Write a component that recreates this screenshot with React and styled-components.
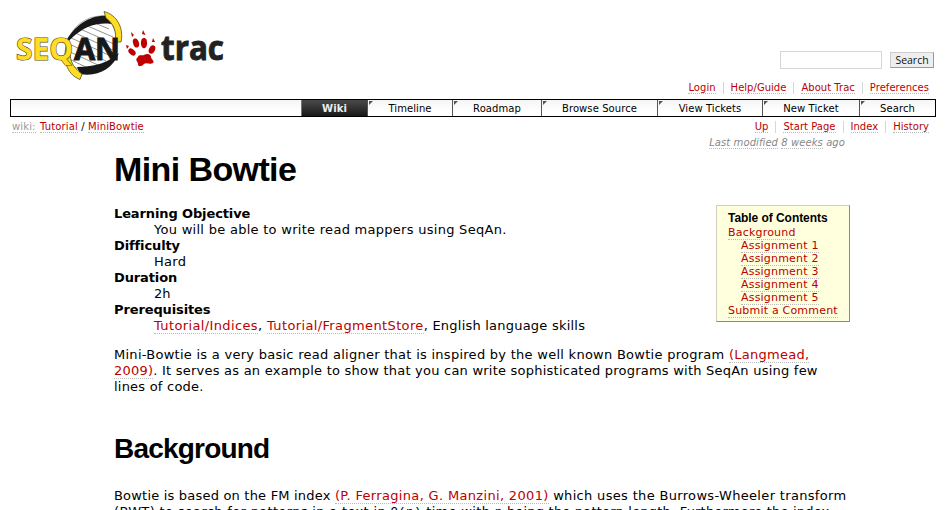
import React from 'react';
import styled, { createGlobalStyle } from 'styled-components';

const GlobalStyle = createGlobalStyle`
  html, body { margin: 0; background: #fff; overflow: hidden; }
  body { font: 13px/16px Verdana, "DejaVu Sans", sans-serif; color: #000; }
`;

const Page = styled.div`
  width: 946px;
  height: 510px;
  box-sizing: border-box;
  padding: 0 10px;
  overflow: hidden;
`;

const Link = styled.a`
  color: #b00;
  border-bottom: 1px dotted #bbb;
`;

const Header = styled.header`
  height: 99px;
  display: flex;
  justify-content: space-between;
`;

const Logo = styled.svg`
  width: 220px;
  height: 90px;
`;

const Tools = styled.div`
  display: flex;
  flex-direction: column;
  align-items: flex-end;
  padding: 51px 2px 0 0;
`;

const SearchForm = styled.div`
  display: flex;
  gap: 8px;
  height: 18px;
`;

const SearchField = styled.input`
  width: 102px;
  height: 18px;
  box-sizing: border-box;
  border: 1px solid #d7d7d7;
  padding: 0;
  background: #fff;
`;

const SearchButton = styled.button`
  width: 44px;
  height: 16px;
  margin-top: 1px;
  padding: 0;
  border: 1px solid #ccc;
  border-right-color: #999;
  border-bottom-color: #999;
  background: #eee;
  color: #111;
  font: 10.5px/13px "Open Sans", "Noto Sans", sans-serif;
`;

const MetaNav = styled.nav`
  display: flex;
  font-size: 10px;
  line-height: 12px;
  margin: ${(p) => p.$margin};
  letter-spacing: 0.03px;
`;

const MetaItem = styled.span`
  display: block;
  height: 12px;
  padding: 0 ${(p) => (p.$last ? 5 : 7)}px 0 7px;
  border-right: ${(p) => (p.$last ? 0 : 1)}px solid #d7d7d7;
`;

const MainNav = styled.nav`
  display: flex;
  justify-content: flex-end;
  height: 16px;
  border: 1px solid #000;
  background: linear-gradient(#f5f5f5, #fff 70%);
  font-size: 10px;
  line-height: 17px;
`;

const Tab = styled.span`
  position: relative;
  box-sizing: border-box;
  width: ${(p) => p.$w}px;
  text-align: center;
  letter-spacing: 0.08px;
  border-left: 1px solid ${(p) => (p.$active ? '#777' : '#555')};
  background: ${(p) => (p.$active ? 'linear-gradient(#484a48, #333 50%, #181818)' : 'none')};
  color: ${(p) => (p.$active ? '#eee' : '#000')};
  font-weight: ${(p) => (p.$active ? 'bold' : 'normal')};
  &::before {
    content: '';
    position: absolute;
    left: 1px;
    top: 1px;
    border-style: solid;
    border-width: 4px 4px 0 0;
    border-color: ${(p) => (p.$active ? 'transparent' : '#555')} transparent transparent;
  }
`;

const ContextBar = styled.div`
  display: flex;
  justify-content: space-between;
  height: 19px;
`;

const Crumbs = styled.div`
  padding: 4px 2px 0;
  font-size: 10px;
  line-height: 12px;
  letter-spacing: 0.14px;
  white-space: pre;
`;

const CrumbLabel = styled.span`
  color: #999;
  margin-right: 1px;
  border-bottom: 1px dotted #bbb;
`;

const Modified = styled.div`
  height: 14px;
  margin-right: 91px;
  text-align: right;
  color: #888;
  font-size: 10px;
  font-style: italic;
  line-height: 14px;
  letter-spacing: 0.08px;
`;

const Dotted = styled.span`
  border-bottom: 1px dotted #bbb;
`;

const Article = styled.main`
  width: 736px;
  margin-left: 104px;
`;

const Title = styled.h1`
  margin: 0;
  height: 55px;
  font: bold 34px/38px "Liberation Sans", Arial, sans-serif;
  letter-spacing: -0.6px;
`;

const Intro = styled.div`
  display: flex;
  justify-content: space-between;
  height: 142px;
`;

const Facts = styled.dl`
  margin: 1px 0 0;
  white-space: pre;
`;

const Term = styled.dt`
  font-weight: bold;
  letter-spacing: -0.12px;
`;

const Detail = styled.dd`
  margin: 0 0 0 40px;
  letter-spacing: ${(p) => p.$ls || 0}px;
`;

const Toc = styled.aside`
  width: 134px;
  height: 117px;
  box-sizing: border-box;
  border: 1px solid #d0d0c0;
  border-right-color: #888;
  border-bottom-color: #888;
  background: #ffd;
  padding: 5px 0 0 11px;
  font-size: 11px;
  line-height: 13px;
  letter-spacing: 0.2px;
`;

const TocTitle = styled.h4`
  margin: 0 0 1px;
  font: bold 12px/14px "Liberation Sans", Arial, sans-serif;
  letter-spacing: -0.05px;
`;

const TocItem = styled.div`
  padding-left: ${(p) => (p.$nested ? 13 : 0)}px;
`;

const Line = styled.div`
  height: 16px;
  white-space: pre;
  letter-spacing: ${(p) => p.$ls || 0}px;
`;

const Run = styled.span`
  letter-spacing: ${(p) => p.$ls}px;
`;

const Subtitle = styled.h2`
  margin: 34px 0 19px;
  font: bold 28px/40px "Liberation Sans", Arial, sans-serif;
  letter-spacing: -0.8px;
`;

const Code = styled.code`
  font: 12.5px "Liberation Mono", monospace;
`;

const tabs = [
  { label: 'Wiki', w: 66, active: true },
  { label: 'Timeline', w: 85 },
  { label: 'Roadmap', w: 89 },
  { label: 'Browse Source', w: 116 },
  { label: 'View Tickets', w: 105 },
  { label: 'New Ticket', w: 97 },
  { label: 'Search', w: 76 },
];

const rungs = [
  [88, 20, 109, 29], [83, 24, 113, 37], [78, 28, 114, 44], [73, 32, 113, 50],
  [69, 37, 111, 56], [67, 43, 106, 61], [66, 50, 100, 66], [67, 58, 92, 70], [70, 65, 84, 72],
];

function Brand() {
  return (
    <Logo viewBox="10 0 220 90">
      <path d="M106 16C118 30 121 48 112 60C104 70 92 75 80 73C66 66 62 52 69 37C77 22 90 15 106 16Z" fill="#fff" stroke="#888" strokeWidth=".7" />
      {rungs.map(([a, b, c, d]) => (
        <line key={b} x1={a} y1={b} x2={c} y2={d} stroke="#777" strokeWidth=".8" />
      ))}
      <path d="M109 16C91 14 75 25 66 41L69 41C74 36 88 21 111 24Z" fill="#181818" />
      <path d="M119 53C109 62 95 67 77 67L80 74C97 77 112 70 119 53Z" fill="#181818" />
      <path d="M104 11.5L106 18C114 24 117 32 115 42L121 42C124 28 117 15 104 11.5Z" fill="#fd2" stroke="#554d18" strokeWidth=".8" />
      <path d="M67 44C62 58 66 74 80 79.5L82 74C72 67 68 58 71 46Z" fill="#fd2" stroke="#554d18" strokeWidth=".8" />
      <g fontFamily="'Open Sans', sans-serif" fontWeight="bold" fontSize="30">
        <text x="16" y="60" textLength="57" lengthAdjust="spacingAndGlyphs" fill="#fd2" stroke="#554d18" strokeWidth="1.2" paintOrder="stroke">SEQ</text>
        <text x="74" y="60" textLength="46" lengthAdjust="spacingAndGlyphs" fill="#181818" stroke="#181818" strokeWidth="1">AN</text>
      </g>
      <g fill="#c00000">
        <path d="M138 57C139 54 142 56 144 55C147 53 151 54 151 57C151 59 155 61 153 63C150 65 146 62 144 64C141 67 138 67 138 64C138 62 135 60 137 58Z" />
        <ellipse cx="136" cy="43" rx="2.9" ry="4.7" transform="rotate(-18 136 43)" />
        <ellipse cx="144" cy="43" rx="3.1" ry="5.2" />
        <ellipse cx="152" cy="49.5" rx="3" ry="4.4" transform="rotate(25 152 49.5)" />
        <ellipse cx="132" cy="52" rx="2.7" ry="4.2" transform="rotate(-48 132 52)" />
        <path d="M131 32L134 35L132 37ZM143 30L145.5 35L142 34ZM153 38L155 42L152 42ZM126 45L129 46L127 49Z" />
      </g>
      <text x="161" y="60" textLength="63" lengthAdjust="spacingAndGlyphs" fontFamily="'Open Sans', sans-serif" fontWeight="bold" fontSize="34" fill="#222" stroke="#222" strokeWidth=".9">trac</text>
    </Logo>
  );
}

function Meta({ items, margin }) {
  return (
    <MetaNav $margin={margin}>
      {items.map((t, i) => (
        <MetaItem key={t} $last={i === items.length - 1}><Link>{t}</Link></MetaItem>
      ))}
    </MetaNav>
  );
}

export default function App() {
  return (
    <Page>
      <GlobalStyle />
      <Header>
        <Brand />
        <Tools>
          <SearchForm>
            <SearchField />
            <SearchButton>Search</SearchButton>
          </SearchForm>
          <Meta items={['Login', 'Help/Guide', 'About Trac', 'Preferences']} margin="13px 0 0" />
        </Tools>
      </Header>
      <MainNav>
        {tabs.map((t) => <Tab key={t.label} $w={t.w} $active={t.active}>{t.label}</Tab>)}
      </MainNav>
      <ContextBar>
        <Crumbs><CrumbLabel>wiki:</CrumbLabel> <Link>Tutorial</Link> / <Link>MiniBowtie</Link></Crumbs>
        <Meta items={['Up', 'Start Page', 'Index', 'History']} margin="4px 2px 0 0" />
      </ContextBar>
      <Modified><Dotted>Last modified</Dotted> <Dotted>8 weeks</Dotted> ago</Modified>
      <Article>
        <Title>Mini Bowtie</Title>
        <Intro>
          <Facts>
            <Term>Learning Objective</Term>
            <Detail $ls={0.28}>You will be able to write read mappers using SeqAn.</Detail>
            <Term>Difficulty</Term>
            <Detail $ls={0.28}>Hard</Detail>
            <Term>Duration</Term>
            <Detail>2h</Detail>
            <Term>Prerequisites</Term>
            <Detail $ls={0.37}><Link>Tutorial/Indices</Link>, <Link>Tutorial/FragmentStore</Link><Run $ls={0.22}>, English language skills</Run></Detail>
          </Facts>
          <Toc>
            <TocTitle>Table of Contents</TocTitle>
            <TocItem><Link>Background</Link></TocItem>
            {[1, 2, 3, 4, 5].map((n) => <TocItem key={n} $nested><Link>Assignment {n}</Link></TocItem>)}
            <TocItem><Link>Submit a Comment</Link></TocItem>
          </Toc>
        </Intro>
        <Line $ls={0.27}>Mini-Bowtie is a very basic read aligner that is inspired by the well known Bowtie program <Link>(Langmead,</Link></Line>
        <Line $ls={0.23}><Link>2009)</Link>. It serves as an example to show that you can write sophisticated programs with SeqAn using few</Line>
        <Line $ls={0.22}>lines of code.</Line>
        <Subtitle>Background</Subtitle>
        <Line $ls={0.33}><Run $ls={0.2}>Bowtie is based on the FM index </Run><Link>(P. Ferragina, G. Manzini, 2001)</Link> which uses the Burrows-Wheeler transform</Line>
        <Line $ls={0.33}>(BWT) to search for patterns in a text in <Code>O(n)</Code> time with <Code>n</Code><Run $ls={0.2}> being the pattern length. Furthermore the index</Run></Line>
      </Article>
    </Page>
  );
}
